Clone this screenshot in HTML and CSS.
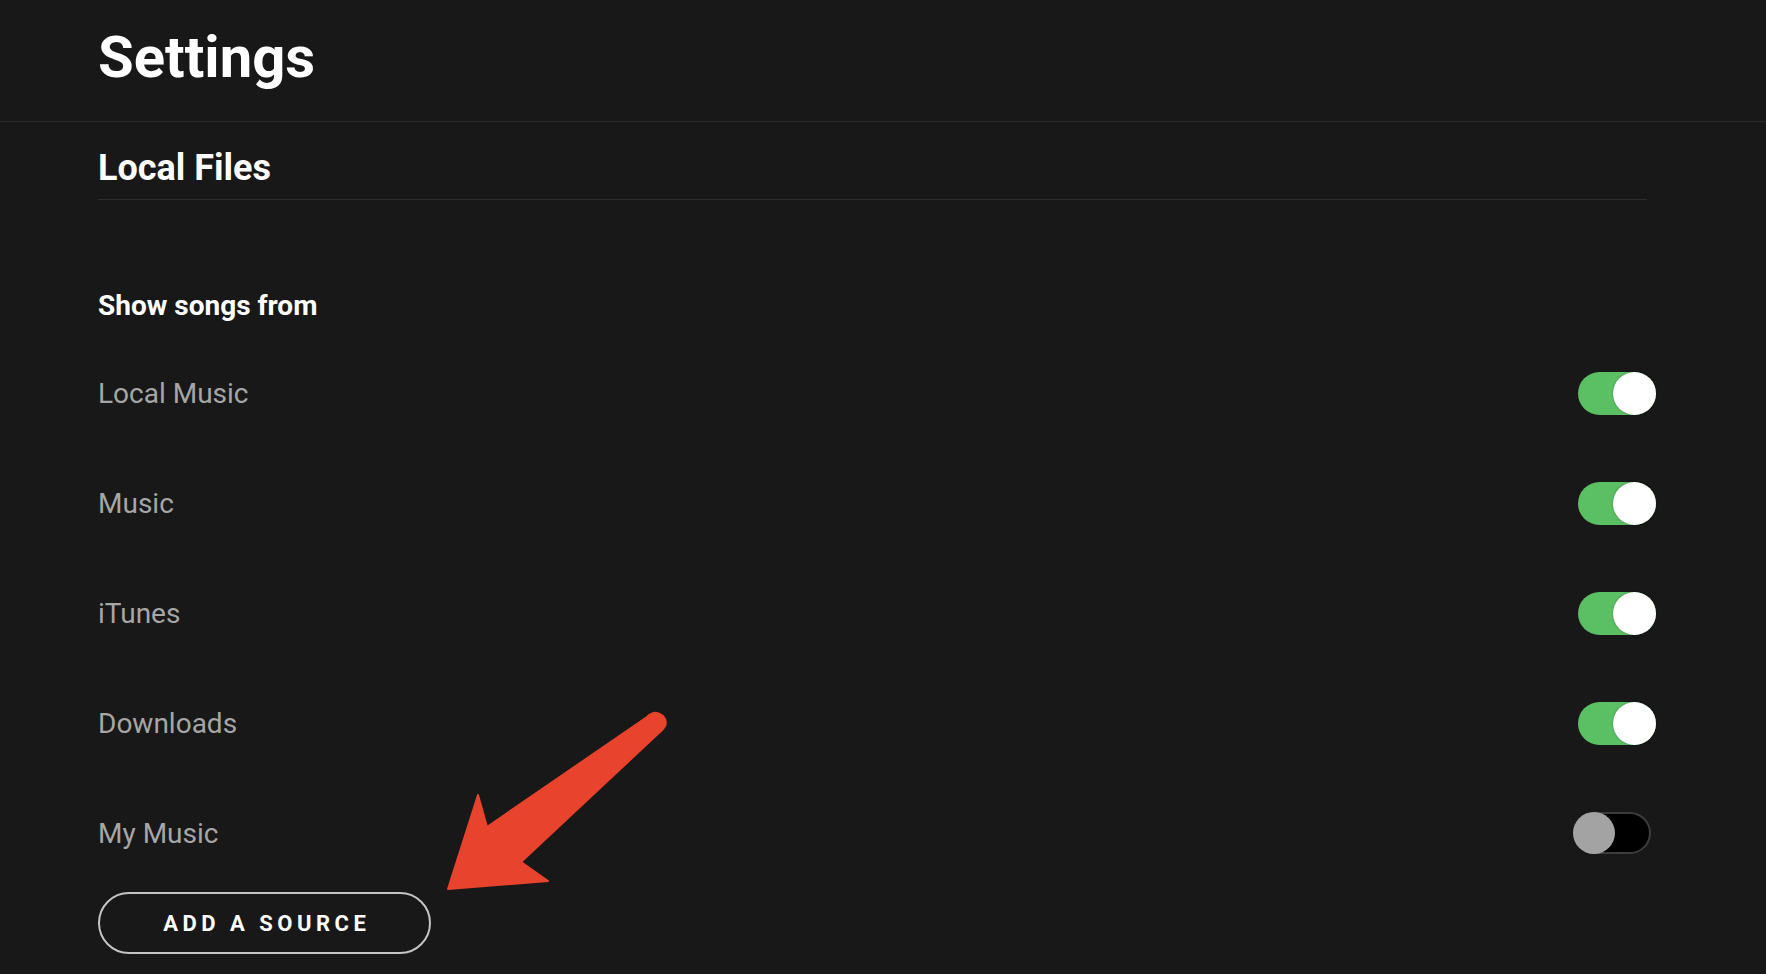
FILE: index.html
```html
<!DOCTYPE html>
<html lang="en">
<head>
<meta charset="utf-8">
<title>Settings</title>
<link rel="stylesheet" href="styles.css">
</head>
<body>
<header class="topbar">
  <h1 class="page-title">Settings</h1>
</header>
<main class="content">
  <h2 class="section-title">Local Files</h2>
  <h3 class="group-title">Show songs from</h3>
  <ul class="source-list">
    <li class="source-row"><span class="source-name">Local Music</span><span class="toggle on"><span class="knob"></span></span></li>
    <li class="source-row"><span class="source-name">Music</span><span class="toggle on"><span class="knob"></span></span></li>
    <li class="source-row"><span class="source-name">iTunes</span><span class="toggle on"><span class="knob"></span></span></li>
    <li class="source-row"><span class="source-name">Downloads</span><span class="toggle on"><span class="knob"></span></span></li>
    <li class="source-row"><span class="source-name">My Music</span><span class="toggle off"><span class="knob"></span></span></li>
  </ul>
  <button class="add-source">ADD A SOURCE</button>
</main>
<svg class="annotation-arrow" width="1766" height="974" viewBox="0 0 1766 974" aria-hidden="true">
  <path d="M647 717 Q655 709 663 716 Q669 723 662 730 L521 862 L548 881 L448 889 L478 795 L487 827 Z" fill="#e8432d" stroke="#e8432d" stroke-width="2" stroke-linejoin="round"/>
</svg>
</body>
</html>
```
FILE: styles.css
```css
* { box-sizing: border-box; }
html, body { margin: 0; padding: 0; }
body {
  width: 1766px;
  height: 974px;
  overflow: hidden;
  background: #181818;
  color: #ffffff;
  font-family: "Roboto", "Liberation Sans", sans-serif;
  position: relative;
}
.topbar {
  height: 122px;
  border-bottom: 1px solid #2a2a2a;
  padding: 23px 0 0 98px;
}
.page-title {
  margin: 0;
  font-size: 58px;
  line-height: 68px;
  font-weight: 700;
}
.content {
  padding: 0 110px 0 98px;
}
.section-title {
  margin: 25px 9px 0 0;
  padding-bottom: 10px;
  border-bottom: 1px solid #2e2e2e;
  font-size: 36px;
  line-height: 42px;
  font-weight: 700;
}
.group-title {
  margin: 90px 0 0;
  font-size: 28px;
  line-height: 32px;
  font-weight: 700;
}
.source-list {
  list-style: none;
  margin: 16px 0 0;
  padding: 0;
}
.source-row {
  height: 110px;
  display: flex;
  align-items: center;
  justify-content: space-between;
}
.source-name {
  font-size: 28px;
  color: #a6a6a6;
}
.toggle {
  position: relative;
  display: block;
  width: 78px;
  height: 43px;
  border-radius: 22px;
}
.toggle.on { background: #5bbf63; }
.toggle.on .knob {
  position: absolute;
  right: 0;
  top: 0;
  width: 43px;
  height: 43px;
  border-radius: 50%;
  background: #ffffff;
  box-shadow: 0 0 2px rgba(0,0,0,0.4);
}
.toggle.off {
  background: #000000;
  border: 2px solid #3c3c3c;
  margin-right: 5px;
  height: 42px;
}
.toggle.off .knob {
  position: absolute;
  left: -2px;
  top: -2px;
  width: 42px;
  height: 42px;
  border-radius: 50%;
  background: #a3a3a3;
}
.add-source {
  display: block;
  margin-top: 4px;
  width: 333px;
  height: 62px;
  border: 2px solid #c4c4c4;
  border-radius: 31px;
  background: transparent;
  color: #ffffff;
  font-family: "Roboto", "Liberation Sans", sans-serif;
  font-size: 22px;
  font-weight: 700;
  letter-spacing: 4.5px;
  padding: 0 0 0 4.5px;
}
.annotation-arrow {
  position: absolute;
  left: 0;
  top: 0;
  pointer-events: none;
}
```
